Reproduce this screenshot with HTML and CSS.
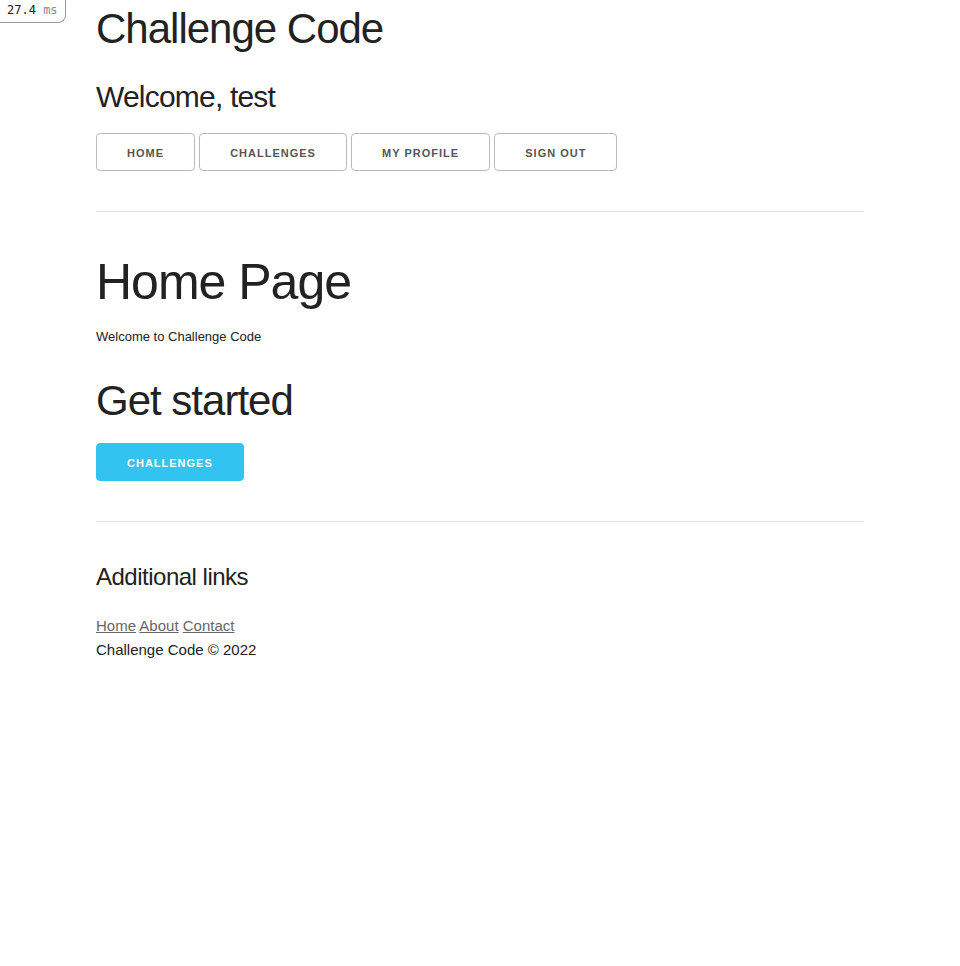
FILE: index.html
```html
<!DOCTYPE html>
<html lang="en">
<head>
<meta charset="utf-8">
<title>Challenge Code</title>
<link rel="stylesheet" href="styles.css">
</head>
<body>
<div class="timing"><span class="num">27.4</span> <span class="unit">ms</span></div>
<div class="container">
  <header class="site-header">
    <h2 class="title">Challenge Code</h2>
    <h4 class="welcome">Welcome, test</h4>
    <nav class="nav">
      <a class="button" href="#">Home</a>
      <a class="button" href="#">Challenges</a>
      <a class="button" href="#">My Profile</a>
      <a class="button" href="#">Sign out</a>
    </nav>
  </header>
  <hr>
  <main>
    <h1 class="page-title">Home Page</h1>
    <p class="intro">Welcome to Challenge Code</p>
    <h2 class="section-title">Get started</h2>
    <a class="button button-primary" href="#">Challenges</a>
  </main>
  <hr>
  <footer class="footer">
    <h5 class="footer-title">Additional links</h5>
    <div class="footer-links"><a href="#">Home</a> <a href="#">About</a> <a href="#">Contact</a></div>
    <div class="copyright">Challenge Code © 2022</div>
  </footer>
</div>
</body>
</html>
```

FILE: styles.css
```css
html { font-size: 62.5%; }
body {
  margin: 0;
  font-size: 1.5em;
  line-height: 1.6;
  font-weight: 400;
  font-family: "Liberation Sans", Arial, sans-serif;
  color: #222;
  background: #fff;
}
.container {
  width: 80%;
  max-width: 960px;
  margin: 0 auto;
  box-sizing: border-box;
}
h1, h2, h4, h5 {
  margin-top: 0;
  margin-bottom: 2rem;
  font-weight: 300;
}
h1 { font-size: 5.0rem; line-height: 1.2; letter-spacing: -.1rem; }
h2 { font-size: 4.2rem; line-height: 1.25; letter-spacing: -.1rem; }
h4 { font-size: 3.0rem; line-height: 1.35; letter-spacing: -.08rem; }
h5 { font-size: 2.4rem; line-height: 1.5; letter-spacing: -.05rem; }

.title { padding-top: 3px; margin-bottom: 17px; }
.welcome { padding-top: 4px; margin-bottom: 16px; }
.page-title { padding-top: 5px; margin-bottom: 15px; }
.section-title { padding-top: 2px; margin-bottom: 15.5px; }
.footer-title { padding-top: 2px; margin-bottom: 19px; }

p { margin-top: 0; margin-bottom: 2.5rem; }
.intro { font-size: 13px; }
.nav { display: flex; gap: 4.17px; }
.button {
  display: inline-block;
  height: 38px;
  padding: 0 30px;
  color: #555;
  text-align: center;
  font-size: 11px;
  font-weight: 600;
  line-height: 38px;
  letter-spacing: .1rem;
  text-transform: uppercase;
  text-decoration: none;
  white-space: nowrap;
  background-color: transparent;
  border-radius: 4px;
  border: 1px solid #bbb;
  box-sizing: border-box;
  margin-bottom: 1rem;
}
.button-primary {
  color: #fff;
  background-color: #33C3F0;
  border-color: #33C3F0;
}
hr {
  margin-top: 3rem;
  margin-bottom: 3.5rem;
  border-width: 0;
  border-top: 1px solid #E1E1E1;
}
.footer-links a { color: #666; }
.timing {
  position: absolute;
  top: 0;
  left: 0;
  padding: 2px 7px 3px 7px;
  font-family: "DejaVu Sans Mono", monospace;
  font-size: 12px;
  line-height: 17px;
  background: #fff;
  border: 1px solid #999;
  border-top: 0;
  border-left: 0;
  border-bottom-right-radius: 8px;
  color: #222;
}
.timing .unit { color: #888; }
```
